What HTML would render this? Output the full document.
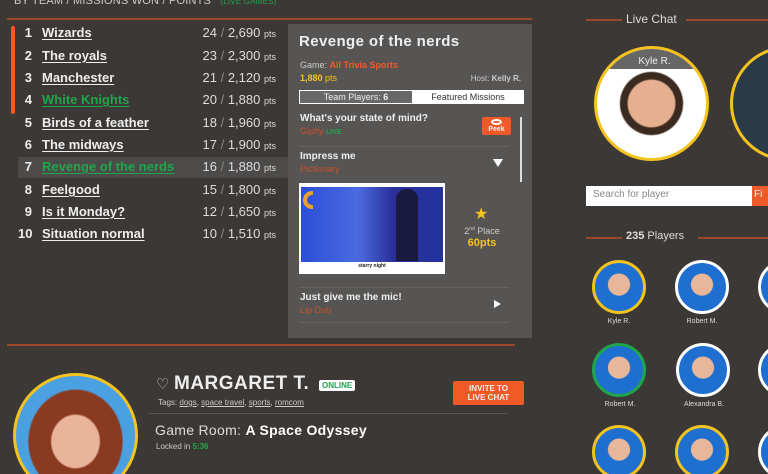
<!DOCTYPE html>
<html><head><meta charset="utf-8"><style>
*{margin:0;padding:0;box-sizing:border-box}
html,body{width:768px;height:474px;overflow:hidden}
body{background:#3b3836;font-family:"Liberation Sans",sans-serif;color:#eee;position:relative}
.a{position:absolute}
.hl{position:absolute;height:2px;background:#9a4a2a}
.row{position:absolute;left:18px;width:270px;height:22px;font-size:13px;font-weight:bold;line-height:22px}
.row .n{position:absolute;left:0px;width:14px;text-align:right}
.row .t{position:absolute;left:24px;text-decoration:underline;text-underline-offset:2px}
.row .s{position:absolute;right:12px;font-weight:normal;color:#ddd}
.row .s small{font-size:9px}
.row .s i{font-style:normal;color:#888}
.g{color:#1fa54a}
.o{color:#f05a28}
.circ{position:absolute;border-radius:50%;overflow:hidden}
.sa{position:absolute;width:54px;height:54px;border-radius:50%;border:3px solid #fff;background:radial-gradient(circle at 50% 45%,#e8b79a 0 30%,#1f6fd0 32%)}
.sa.y{border-color:#f4c320}.sa.gr{border-color:#1fa54a}
.nm{position:absolute;font-size:7px;color:#ddd;width:70px;text-align:center}
</style></head><body>
<div class="a" style="left:14px;top:-5px;font-size:11px;color:#ccc;letter-spacing:.2px">BY TEAM / MISSIONS WON / POINTS <span class="g" style="font-size:8px;margin-left:6px">(LIVE GAMES)</span></div>
<div class="hl" style="left:7px;top:18px;width:525px"></div>
<div class="a" style="left:11px;top:26px;width:4px;height:88px;background:#f05a28;border-radius:2px"></div>
<div class="a" style="left:18px;top:157px;width:270px;height:21px;background:#4d4b49"></div>
<div class="row" style="top:22px"><span class="n">1</span><span class="t">Wizards</span><span class="s">24 <i>/</i> 2,690 <small>pts</small></span></div>
<div class="row" style="top:45px"><span class="n">2</span><span class="t">The royals</span><span class="s">23 <i>/</i> 2,300 <small>pts</small></span></div>
<div class="row" style="top:67px"><span class="n">3</span><span class="t">Manchester</span><span class="s">21 <i>/</i> 2,120 <small>pts</small></span></div>
<div class="row" style="top:89px"><span class="n">4</span><span class="t g">White Knights</span><span class="s">20 <i>/</i> 1,880 <small>pts</small></span></div>
<div class="row" style="top:112px"><span class="n">5</span><span class="t">Birds of a feather</span><span class="s">18 <i>/</i> 1,960 <small>pts</small></span></div>
<div class="row" style="top:134px"><span class="n">6</span><span class="t">The midways</span><span class="s">17 <i>/</i> 1,900 <small>pts</small></span></div>
<div class="row" style="top:156px"><span class="n">7</span><span class="t g">Revenge of the nerds</span><span class="s">16 <i>/</i> 1,880 <small>pts</small></span></div>
<div class="row" style="top:179px"><span class="n">8</span><span class="t">Feelgood</span><span class="s">15 <i>/</i> 1,800 <small>pts</small></span></div>
<div class="row" style="top:201px"><span class="n">9</span><span class="t">Is it Monday?</span><span class="s">12 <i>/</i> 1,650 <small>pts</small></span></div>
<div class="row" style="top:223px"><span class="n">10</span><span class="t">Situation normal</span><span class="s">10 <i>/</i> 1,510 <small>pts</small></span></div>

<div class="a" style="left:288px;top:24px;width:244px;height:314px;background:#575553">
 <div class="a" style="left:11px;top:9px;font-size:15px;font-weight:bold;letter-spacing:.4px">Revenge of the nerds</div>
 <div class="a" style="left:12px;top:36px;font-size:9px;color:#ccc">Game: <b class="o">All Trivia Sports</b></div>
 <div class="a" style="left:12px;top:49px;font-size:9px;color:#f4c320"><b>1,880</b> pts</div>
 <div class="a" style="right:11px;top:50px;font-size:8px;color:#ccc">Host: <b>Kelly R.</b></div>
 <div class="a" style="left:11px;top:66px;width:225px;height:14px;border:1px solid #fff;font-size:9px;line-height:12px">
  <div class="a" style="left:0;top:0;width:112px;height:12px;background:#6a6866;text-align:center">Team Players: <b>6</b></div>
  <div class="a" style="left:112px;top:0;width:112px;height:12px;background:#fff;color:#333;text-align:center">Featured Missions</div>
 </div>
 <div class="a" style="left:12px;top:89px;font-size:10px;font-weight:bold">What's your state of mind?</div>
 <div class="a" style="left:12px;top:102px;font-size:9px;color:#c8502a">Giphy <b class="g" style="font-size:7px">LIVE</b></div>
 <div class="a" style="left:194px;top:93px;width:29px;height:18px;background:#f05a28;border-radius:2px;font-size:7px;font-weight:bold;text-align:center;line-height:25px">Peek<div class="a" style="left:9px;top:2px;width:11px;height:6px;border:2px solid #fff;border-radius:50%"></div></div>
 <div class="a" style="left:11px;top:122px;width:210px;height:1px;background:#646260"></div>
 <div class="a" style="left:12px;top:127px;font-size:10px;font-weight:bold">Impress me</div>
 <div class="a" style="left:12px;top:140px;font-size:9px;color:#c8502a">Pictionary</div>
 <div class="a" style="left:205px;top:135px;width:0;height:0;border-left:5px solid transparent;border-right:5px solid transparent;border-top:8px solid #fff"></div>
 <div class="a" style="left:232px;top:93px;width:2px;height:65px;background:#ddd"></div>
 <div class="a" style="left:11px;top:159px;width:146px;height:91px;background:#fff">
  <div class="a" style="left:2px;top:4px;width:142px;height:75px;background:linear-gradient(90deg,#2b4ed8,#4a6be0 40%,#2a2f9a 65%,#2233a0)"></div>
  <div class="a" style="left:97px;top:6px;width:22px;height:72px;background:#1a1a40;border-radius:10px 10px 0 0"></div>
  <div class="a" style="left:4px;top:8px;width:10px;height:18px;border:4px solid #e8a030;border-right:none;border-radius:10px 0 0 10px"></div>
  <div class="a" style="left:0;top:80px;width:146px;font-size:5px;color:#222;text-align:center;font-weight:bold">starry night</div>
 </div>
 <div class="a" style="left:186px;top:180px;color:#f4c320;font-size:16px">★</div>
 <div class="a" style="left:170px;top:202px;width:48px;text-align:center;font-size:9px;color:#ccc">2<sup style="font-size:5px">nd</sup> Place</div>
 <div class="a" style="left:170px;top:213px;width:48px;text-align:center;font-size:11px;font-weight:bold;color:#f4c320">60pts</div>
 <div class="a" style="left:11px;top:263px;width:210px;height:1px;background:#646260"></div>
 <div class="a" style="left:12px;top:268px;font-size:10px;font-weight:bold">Just give me the mic!</div>
 <div class="a" style="left:12px;top:281px;font-size:9px;color:#c8502a">Lip Dub</div>
 <div class="a" style="left:206px;top:276px;border-top:4px solid transparent;border-bottom:4px solid transparent;border-left:7px solid #fff"></div>
 <div class="a" style="left:11px;top:298px;width:210px;height:1px;background:#646260"></div>
</div>

<div class="hl" style="left:7px;top:344px;width:508px"></div>
<div class="circ" style="left:13px;top:373px;width:125px;height:125px;border:3px solid #f4c320;background:radial-gradient(ellipse at 50% 55%,#e9b49a 0 28%,#8a3a20 30% 55%,#4aa0e0 57%)"></div>
<div class="a" style="left:156px;top:375px;font-size:15px;color:#ccc">♡</div>
<div class="a" style="left:174px;top:373px;font-size:19px;font-weight:bold;letter-spacing:.5px">MARGARET T.</div>
<div class="a" style="left:319px;top:380px;background:#fff;color:#1fa54a;font-size:8px;font-weight:bold;padding:1px 3px;border-radius:2px">ONLINE</div>
<div class="a" style="left:158px;top:398px;font-size:8px;color:#ccc">Tags: <u>dogs</u>, <u>space travel</u>, <u>sports</u>, <u>romcom</u></div>
<div class="a" style="left:148px;top:413px;width:360px;height:1px;background:#555"></div>
<div class="a" style="left:453px;top:381px;width:71px;height:24px;background:#f05a28;border-radius:2px;font-size:8px;font-weight:bold;text-align:center;line-height:9px;padding-top:3px">INVITE TO<br>LIVE CHAT</div>
<div class="a" style="left:155px;top:422px;font-size:14px;color:#ddd;letter-spacing:.3px">Game Room: <b style="color:#fff">A Space Odyssey</b></div>
<div class="a" style="left:156px;top:442px;font-size:8px;color:#ccc">Locked in <b class="g">5:36</b></div>

<div class="hl" style="left:586px;top:19px;width:36px"></div>
<div class="a" style="left:626px;top:12px;font-size:12px;color:#ddd">Live Chat</div>
<div class="hl" style="left:686px;top:19px;width:82px"></div>
<div class="circ" style="left:594px;top:46px;width:115px;height:115px;border:3px solid #f4c320;background:radial-gradient(ellipse at 50% 50%,#e6b090 0 30%,#3a2a20 32% 40%,#fff 42%)">
 <div class="a" style="left:0;top:0;width:115px;height:20px;background:#666;color:#eee;font-size:10px;text-align:center;line-height:26px">Kyle R.</div>
</div>
<div class="circ" style="left:730px;top:46px;width:115px;height:115px;border:3px solid #f4c320;background:#2a3a48"></div>
<div class="a" style="left:586px;top:186px;width:166px;height:20px;background:#fff;font-size:10px;color:#888;padding:3px 7px">Search for player</div>
<div class="a" style="left:752px;top:186px;width:16px;height:20px;background:#f05a28;font-size:10px;padding:3px 2px">Fi</div>
<div class="hl" style="left:586px;top:237px;width:36px"></div>
<div class="a" style="left:626px;top:230px;font-size:11px;color:#ddd"><b>235</b> Players</div>
<div class="hl" style="left:698px;top:237px;width:70px"></div>
<div class="sa y" style="left:592px;top:260px"></div>
<div class="sa" style="left:675px;top:260px"></div>
<div class="sa" style="left:758px;top:260px"></div>
<div class="nm" style="left:584px;top:318px">Kyle R.</div>
<div class="nm" style="left:667px;top:318px">Robert M.</div>
<div class="sa gr" style="left:592px;top:343px"></div>
<div class="sa" style="left:676px;top:343px"></div>
<div class="sa" style="left:758px;top:343px"></div>
<div class="nm" style="left:585px;top:401px">Robert M.</div>
<div class="nm" style="left:669px;top:401px">Alexandra B.</div>
<div class="sa y" style="left:592px;top:425px"></div>
<div class="sa y" style="left:675px;top:425px"></div>
<div class="sa" style="left:758px;top:425px"></div>
</body></html>
